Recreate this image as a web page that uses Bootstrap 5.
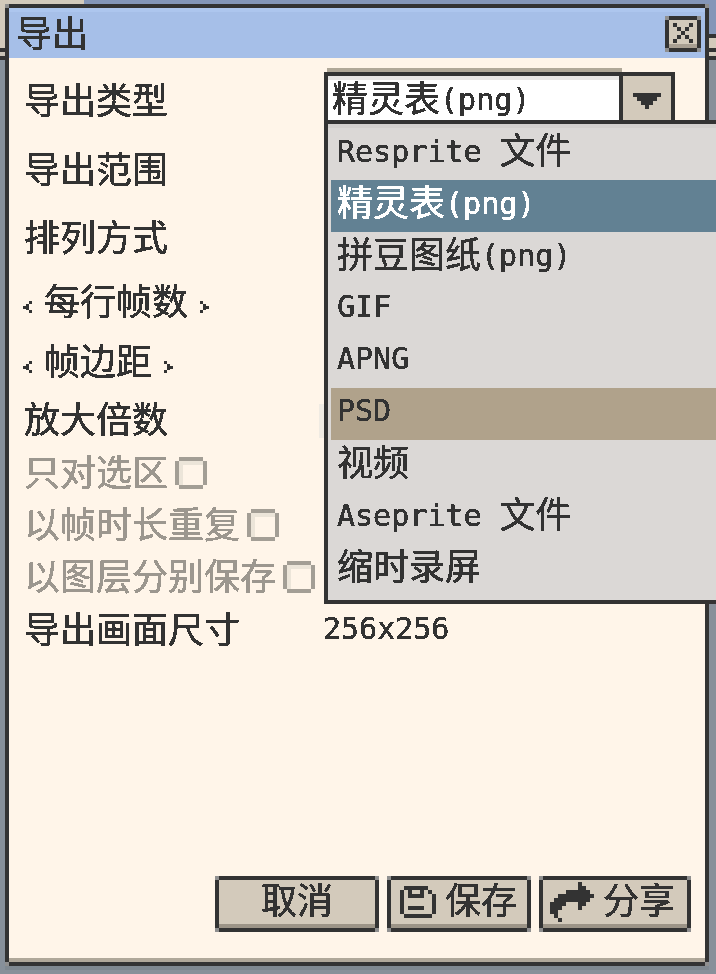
<!DOCTYPE html>
<html lang="zh">
<head>
<meta charset="utf-8">
<title>导出</title>
<link href="https://cdn.jsdelivr.net/npm/bootstrap@5.3.0/dist/css/bootstrap.min.css" rel="stylesheet">
<style>
html,body{height:100%;}
body{width:716px;height:974px;overflow:hidden;position:relative;background:#87909a;margin:0;color:#333;
  font-family:"DejaVu Sans Mono","Noto Sans CJK SC",monospace;font-size:36px;line-height:1;}
.top-strip{height:4px;background:#8496b8;}
.top-tab{width:84px;height:4px;background:#d3cabb;}
.side-l{position:absolute;left:0;top:0;width:5px;height:60px;
  background:linear-gradient(#d3cabb 48px,#333 48px,#333 52px,#c9c3b7 52px,#c9c3b7 56px,#333 56px);}
.side-r{position:absolute;right:0;top:0;width:7px;height:60px;
  background:linear-gradient(#8496b8 34px,#333 34px,#333 38px,#d3cabb 38px,#d3cabb 48px,#333 48px,#333 52px,#d3cabb 52px,#d3cabb 56px,#333 56px);}
.win{margin-left:5px;width:704px;height:962px;border:4px solid #333;background:#fff5e9;display:flex;flex-direction:column;position:relative;box-shadow:0 4px 0 #7f8890;}
.notched{position:relative;}
.notched::after{content:"";position:absolute;inset:-4px;pointer-events:none;
  background:linear-gradient(#8f8f8f,#8f8f8f) 0 0/4px 4px no-repeat,linear-gradient(#8f8f8f,#8f8f8f) 100% 0/4px 4px no-repeat,linear-gradient(#8f8f8f,#8f8f8f) 0 100%/4px 4px no-repeat,linear-gradient(#8f8f8f,#8f8f8f) 100% 100%/4px 4px no-repeat;}
.win-title{height:50px;flex:none;background:#a6bfe8;border-top:4px solid #adc6ee;padding-left:7px;}
.lat{font-size:30px;}
.lift{display:inline-block;transform:translateY(-2px);}
.crisp{filter:url(#crisp);-webkit-text-stroke:.5px currentColor;}
.x-btn{width:36px;height:36px;margin-right:4px;margin-top:-2px;border:4px solid #333;background:#d3cabb;box-shadow:inset 0 -4px 0 #a89f92;padding-bottom:2px;}
.win-body{flex:1;position:relative;}
.f-row{display:grid;grid-template-columns:295px 1fr;align-items:center;padding-left:15px;}
.h70{height:70px}.h68{height:68px}.h60{height:60px}.h59{height:59px}.h58{height:58px}.h48{height:48px}.h56{height:56px}
.f-row:first-child{margin-top:9px;}
.muted-row{color:#9c978f;}
.chk{display:inline-block;width:32px;height:32px;vertical-align:-3px;margin-left:7px;
  background:
   linear-gradient(#a39e95,#a39e95) 4px 0/24px 4px no-repeat,
   linear-gradient(#a39e95,#a39e95) 4px 100%/24px 4px no-repeat,
   linear-gradient(#a39e95,#a39e95) 0 4px/4px 24px no-repeat,
   linear-gradient(#a39e95,#a39e95) 100% 4px/4px 24px no-repeat,
   linear-gradient(#ece5d9,#ece5d9) 4px 4px/24px 4px no-repeat,
   linear-gradient(#ece5d9,#ece5d9) 4px 4px/4px 24px no-repeat;}
.chev{display:inline-block;vertical-align:2px;}
.chev-l{margin:0 12px 0 -1px;}
.chev-r{margin-left:12px;}
.val{padding-left:4px;font-size:30px;margin-bottom:4px;}
.stub{width:7px;height:34px;background:#f0ebe3;}
.sel{position:absolute;left:315px;top:14px;width:351px;height:52px;display:flex;}
.sel-box{flex:1;background:#fff;border-top:4px solid #333;border-left:4px solid #333;border-bottom:4px solid #333;box-shadow:3px -4px 0 -0px #b0a898,inset 0 4px 0 #e8e6e4;padding:4px 0 0 4px;display:flex;align-items:center;}
.sel-btn{width:56px;flex:none;background:#d3cabb;border:4px solid #333;display:flex;align-items:center;justify-content:center;padding-top:6px;position:relative;}
.menu{position:absolute;left:315px;top:62px;width:392px;height:484px;background:#dbd8d6;border:4px solid #333;border-right:0;box-shadow:inset 0 4px 0 #d3d0ce;padding-left:3px;padding-top:4px;z-index:2;}
.m-item{height:52px;padding:0 0 4px 6px;display:flex;align-items:center;white-space:pre;}
.m-lat{padding-bottom:6px;}
.m-on{background:#628193;color:#fff;}
.m-hot{background:#b0a28b;}
.foot{position:absolute;right:14px;bottom:30px;display:flex;gap:8px;}
.pb{height:56px;border:4px solid #333;background:#d3cabb;box-shadow:inset 0 -4px 0 #9c9487;display:flex;align-items:center;justify-content:center;padding-bottom:4px;}
.pb1{width:164px}
.pb2{width:144px;gap:9px;justify-content:flex-start;padding-left:9px;}
.pb3{width:152px;gap:9px;justify-content:flex-start;padding-left:7px;}
.win-bot{position:absolute;left:0;right:0;bottom:0;height:4px;background:#b0a89a;}
</style>
</head>
<body>
<svg width="0" height="0" class="position-absolute"><filter id="crisp" color-interpolation-filters="sRGB"><feComponentTransfer><feFuncA type="discrete" tableValues="0 0 1 1"/></feComponentTransfer></filter></svg>
<div class="top-strip"><div class="top-tab"></div></div>
<div class="side-l"></div><div class="side-r"></div>
<div class="win notched">
  <div class="win-title d-flex align-items-center justify-content-between">
    <span class="crisp">导出</span>
    <div class="x-btn notched d-flex align-items-center justify-content-center">
      <svg width="20" height="20" viewBox="0 0 5 5" shape-rendering="crispEdges"><path d="M0 0h1v1H0zM4 0h1v1H4zM1 1h1v1H1zM3 1h1v1H3zM2 2h1v1H2zM1 3h1v1H1zM3 3h1v1H3zM0 4h1v1H0zM4 4h1v1H4z" fill="#333"/></svg>
    </div>
  </div>
  <div class="win-body">
    <div class="f-row h70"><span class="crisp">导出类型</span></div>
    <div class="f-row h68"><span class="crisp">导出范围</span></div>
    <div class="f-row h68"><span class="crisp">排列方式</span></div>
    <div class="f-row h60"><span><svg class="chev chev-l" width="9" height="12" viewBox="0 0 3 4" shape-rendering="crispEdges"><path d="M2 0h1v1H2zM1 1h1v1H1zM0 1.5h1v1H0zM1 2h1v1H1zM2 3h1v1H2z" fill="#333"/></svg><span class="crisp">每行帧数</span><svg class="chev chev-r" width="9" height="12" viewBox="0 0 3 4" shape-rendering="crispEdges"><path d="M0 0h1v1H0zM1 1h1v1H1zM2 1.5h1v1H2zM1 2h1v1H1zM0 3h1v1H0z" fill="#333"/></svg></span></div>
    <div class="f-row h59"><span><svg class="chev chev-l" width="9" height="12" viewBox="0 0 3 4" shape-rendering="crispEdges"><path d="M2 0h1v1H2zM1 1h1v1H1zM0 1.5h1v1H0zM1 2h1v1H1zM2 3h1v1H2z" fill="#333"/></svg><span class="crisp">帧边距</span><svg class="chev chev-r" width="9" height="12" viewBox="0 0 3 4" shape-rendering="crispEdges"><path d="M0 0h1v1H0zM1 1h1v1H1zM2 1.5h1v1H2zM1 2h1v1H1zM0 3h1v1H0z" fill="#333"/></svg></span></div>
    <div class="f-row h58"><span class="crisp">放大倍数</span><div class="stub"></div></div>
    <div class="f-row h48 muted-row"><span><span class="crisp">只对选区</span><span class="chk"></span></span></div>
    <div class="f-row h56 muted-row"><span><span class="crisp">以帧时长重复</span><span class="chk"></span></span></div>
    <div class="f-row h48 muted-row"><span class="text-nowrap"><span class="crisp">以图层分别保存</span><span class="chk"></span></span></div>
    <div class="f-row h58"><span class="crisp">导出画面尺寸</span><span class="val crisp">256x256</span></div>

    <div class="sel">
      <div class="sel-box"><span class="crisp">精灵表<span class="lat lift">(png)</span></span></div>
      <div class="sel-btn"><svg width="28" height="16" viewBox="0 0 7 4" shape-rendering="crispEdges"><path d="M0 0h7v1H6v1H5v1H4v1H3V3H2V2H1V1H0z" fill="#333"/></svg></div>
    </div>
    <div class="menu">
      <div class="m-item"><span class="crisp"><span class="lat lift">Resprite </span>文件</span></div>
      <div class="m-item m-on"><span class="crisp">精灵表<span class="lat lift">(png)</span></span></div>
      <div class="m-item"><span class="crisp">拼豆图纸<span class="lat lift">(png)</span></span></div>
      <div class="m-item m-lat"><span class="crisp lat">GIF</span></div>
      <div class="m-item m-lat"><span class="crisp lat">APNG</span></div>
      <div class="m-item m-lat m-hot"><span class="crisp lat">PSD</span></div>
      <div class="m-item"><span class="crisp">视频</span></div>
      <div class="m-item"><span class="crisp"><span class="lat lift">Aseprite </span>文件</span></div>
      <div class="m-item"><span class="crisp">缩时录屏</span></div>
    </div>

    <div class="foot">
      <div class="pb pb1 notched"><span class="crisp">取消</span></div>
      <div class="pb pb2 notched">
        <svg width="36" height="32" viewBox="0 0 9 8" shape-rendering="crispEdges"><path d="M0 1h1v6H0zM1 0h6v1H1zM7 1h1v1H7zM8 2h1v5H8zM1 7h7v1H1zM2 1h1v1H2zM5 1h1v1H5zM2 2h4v1H2zM2 5h4v1H2z" fill="#333"/></svg>
        <span class="crisp">保存</span>
      </div>
      <div class="pb pb3 notched">
        <svg width="44" height="40" viewBox="0 0 11 10" shape-rendering="crispEdges"><path d="M7 0h1v1H7zM7 1h2v1H7zM4 2h6v1H4zM2 3h9v1H2zM1 4h9v1H1zM0 5h4v1H0zM7 5h2v1H7zM0 6h3v1H0zM7 6h1v1H7zM0 7h2v1H0zM1 8h1v1H1zM2 9h1v1H2z" fill="#333"/></svg>
        <span class="crisp">分享</span>
      </div>
    </div>
    <div class="win-bot"></div>
  </div>
</div>
</body>
</html>
